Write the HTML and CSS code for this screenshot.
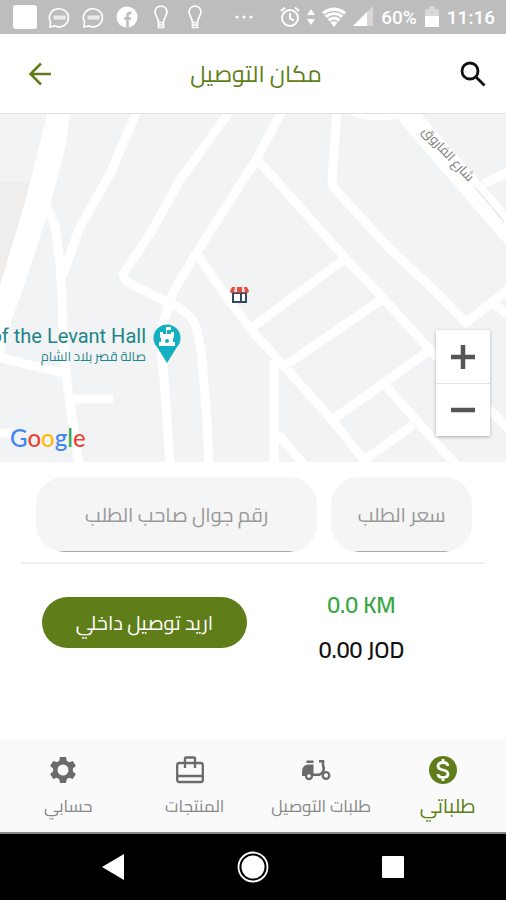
FILE: index.html
```
<!DOCTYPE html>
<html lang="ar">
<head>
    <meta charset="UTF-8">
    <meta name="viewport" content="width=device-width, initial-scale=1.0">
    <title>مكان التوصيل</title>
    <link rel="stylesheet" href="styles.css">
</head>
<body>
    <div class="status-bar">
        <div class="status-group">
            <svg width="24" height="24" viewBox="0 0 24 24"><rect width="24" height="24" rx="3" fill="#fff"/></svg>
            <svg width="24" height="24" viewBox="0 0 24 24" fill="none" stroke="#fff" stroke-width="1.700"><path d="M3.500 17A9.500 9 0 1 1 8 21L3 22Z"/><path d="M6.500 12.500h12" stroke-width="4" opacity=".7"/></svg>
            <svg width="24" height="24" viewBox="0 0 24 24" fill="none" stroke="#fff" stroke-width="1.700"><path d="M3.500 17A9.500 9 0 1 1 8 21L3 22Z"/><path d="M6.500 12.500h12" stroke-width="4" opacity=".7"/></svg>
            <svg width="24" height="24" viewBox="0 0 24 24"><circle cx="12" cy="12" r="10.500" fill="#fff"/><path d="M12.500 22.500v-12q0-3 4-2.600M9 13.500h7" fill="none" stroke="#bdbdbd" stroke-width="2.600"/></svg>
            <svg width="24" height="24" viewBox="0 0 24 24" fill="none" stroke="#fff" stroke-width="1.700"><path d="M9.500 17.500C9.500 13 6 11 6 7a6 6 0 0 1 12 0c0 4-3.500 6-3.500 10.500ZM9.500 17.500v5h5v-5M9.500 20h5"/></svg>
            <svg width="24" height="24" viewBox="0 0 24 24" fill="none" stroke="#fff" stroke-width="1.700"><path d="M9.500 17.500C9.500 13 6 11 6 7a6 6 0 0 1 12 0c0 4-3.500 6-3.500 10.500ZM9.500 17.500v5h5v-5M9.500 20h5"/></svg>
        </div>
        <svg width="20" height="24" viewBox="0 0 20 24" fill="#fff"><circle cx="3" cy="12" r="1.500"/><circle cx="10" cy="12" r="1.500"/><circle cx="17" cy="12" r="1.500"/></svg>
        <div class="status-group status-right">
            <svg width="20" height="22" viewBox="0 0 20 22" fill="none" stroke="#fff" stroke-width="2"><circle cx="10" cy="12" r="8"/><path d="M10 7v5.500l4 2M1 5l4-3.500M19 5l-4-3.500"/></svg>
            <svg width="8" height="22" viewBox="0 0 8 22" fill="#fff"><path d="M4 3l4 6H0ZM4 19l4-6H0Z"/></svg>
            <svg width="24" height="22" viewBox="0 0 24 22"><path d="M12 21L0 6Q12-3 24 6Z" fill="#fff"/><path d="M2 9Q12 2 22 9M5 12.500Q12 7 19 12.500M8 16Q12 13 16 16" fill="none" stroke="#bdbdbd" stroke-width="1.300"/></svg>
            <svg width="20" height="22" viewBox="0 0 20 22"><path d="M0 20L20 0V20Z" fill="#fff" opacity=".4"/><path d="M0 20L14 6V20Z" fill="#fff"/></svg>
            <span class="battery-level">60%</span>
            <svg width="14" height="22" viewBox="0 0 14 22" fill="#fff"><path d="M4 0h6v3h4v7H0V3h4Z" opacity=".4"/><path d="M0 10h14v11H0Z"/></svg>
            <span class="clock">11:16</span>
        </div>
    </div>

    <header>
        <button type="button" class="btn-icon" aria-label="رجوع">
            <svg width="24" height="24" viewBox="0 0 24 24" fill="none" stroke="#5f7d18" stroke-width="2.500"><path d="M23 12H3M13 1.500L2.500 12L13 22.500"/></svg>
        </button>
        <h1 dir="rtl">مكان التوصيل</h1>
        <button type="button" class="btn-icon" aria-label="بحث">
            <svg width="26" height="26" viewBox="0 0 26 26" fill="none" stroke="#111" stroke-width="2.800"><circle cx="10" cy="10" r="8"/><path d="M15.500 15.500L24.500 24.500"/></svg>
        </button>
    </header>

    <main>
        <div class="map">
            <svg class="map-canvas" viewBox="0 0 506 348" preserveAspectRatio="xMidYMid slice">
                <path d="M0 68H32L0 172Z" fill="#f0eeed"/>
                <!-- main roads -->
                <path d="M47 0H70L66 30L50 92L24 172L12 205L3 245L0 245V172L26 85Z" fill="#fff"/>
                <path d="M393 0H421L506 97V131Z" fill="#fff"/>
                <!-- side streets -->
                <g class="streets">
                    <path d="M47 92L55 112L60 150L62 180L63 226L68 276L79 350"/>
                    <path d="M137-3L110 60L80 113L63 160"/>
                    <path d="M230-3L180 66L150 120L123 160L127 168L173 191Q193 200 197 216L202 243L207 309L209 350"/>
                    <path d="M282-3L256 46L197 138L173 178L162 212L162 243L165 276L170 350"/>
                    <path d="M257 45L346 145L383 184L430 236L510 316"/>
                    <path d="M337-3L332 66Q332 72 336 76L386 131L436 178L466 209L510 174M492 189L510 202"/>
                    <path d="M197 140L223 178L253 218L283 251L333 307L367 350"/>
                    <path d="M343 146L300 178L253 213M381 186L286 251M430 236L331 307M385 271L455 350M413 311L362 348"/>
                    <path d="M274 246V350M278 320L303 350M352-3Q372 5 396 0M483 70L510 57"/>
                    <path d="M0 244L64 259M70 285H113M0 319H12"/>
                </g>
                <path d="M475 73L504 108" fill="none" stroke="#d5d7d9" stroke-width="1"/>
                <text class="street-name" transform="translate(445 43) rotate(47)">شارع الفاروق</text>

                <!-- hall pin -->
                <text class="poi-name" x="146" y="229">of the Levant Hall</text>
                <text class="poi-name-ar" x="146" y="247">صالة قصر بلاد الشام</text>
                <path d="M167 249L157 233A13.500 13.500 0 1 1 177 233Z" fill="#12b0c0"/>
                <path d="M160 218h3v2h3v-7h5v3h-4v4h4v-2h3v5l-1 1v4h2v4h-16v-4h2v-4l-1-1Z" fill="#fff"/>
                <circle cx="167" cy="227" r="2" fill="#12b0c0"/>

                <!-- store marker -->
                <path d="M233 179h13v9h-13Z" fill="#fff" stroke="#344a5e" stroke-width="2"/>
                <path d="M241 188v-8" stroke="#344a5e" stroke-width="2"/>
                <path d="M232 173h15l2 4a2.200 2.200 0 0 1-4 1 2.200 2.200 0 0 1-3.700 0 2.200 2.200 0 0 1-3.700 0 2.200 2.200 0 0 1-3.600 0 2.200 2.200 0 0 1-4-1Z" fill="#e0523f"/>
                <path d="M235 173h2v5h-3ZM242 173h2l1 5h-3Z" fill="#f3dedb"/>
            </svg>
            <div class="map-logo" dir="ltr"><span class="blue">G</span><span class="red">o</span><span class="yellow">o</span><span class="blue">g</span><span class="green">l</span><span class="red">e</span></div>
            <div class="zoom-controls">
                <button type="button" aria-label="تكبير"><svg width="24" height="24" viewBox="0 0 24 24"><path d="M0 12H24M12 0V24" stroke="#555" stroke-width="4.500"/></svg></button>
                <button type="button" aria-label="تصغير"><svg width="24" height="24" viewBox="0 0 24 24"><path d="M0 12H24" stroke="#555" stroke-width="4.500"/></svg></button>
            </div>
        </div>

        <form class="order-form">
            <input type="tel" class="field" dir="rtl" placeholder="رقم جوال صاحب الطلب" aria-label="رقم جوال صاحب الطلب">
            <input type="text" class="field" dir="rtl" placeholder="سعر الطلب" aria-label="سعر الطلب">
        </form>
        <hr>
        <div class="summary">
            <button type="button" class="btn-delivery" dir="rtl">اريد توصيل داخلي</button>
            <div class="totals">
                <div class="distance">0.0 KM</div>
                <div class="price">0.00 JOD</div>
            </div>
        </div>
    </main>

    <nav class="tabs">
        <a href="#">
            <svg width="28" height="28" viewBox="0 0 28 28"><path d="M11 1h6l.7 3.700 2.500 1.500 3.600-1.300 3 5-2.900 2.500v3.200l2.900 2.500-3 5-3.600-1.300-2.500 1.500L17 27h-6l-.7-3.700-2.500-1.500-3.600 1.300-3-5 2.900-2.500v-3.200L1.200 9.900l3-5 3.600 1.300 2.500-1.500Z" fill="#6b6b6b"/><circle cx="14" cy="14" r="5.500" fill="#fafafa"/></svg>
            <span>حسابي</span>
        </a>
        <a href="#">
            <svg width="28" height="28" viewBox="0 0 28 28" fill="none" stroke="#6b6b6b" stroke-width="2.300"><rect x="1.200" y="7" width="25.600" height="19" rx="2"/><path d="M1 20H27M9 12V2.500Q9 1.500 10 1.500H18Q19 1.500 19 2.500V12"/></svg>
            <span>المنتجات</span>
        </a>
        <a href="#">
            <svg width="30" height="28" viewBox="0 0 30 28"><path d="M5.500 4.500h7V7h-7ZM1 20v-4q0-7 6-7.500h5.500V20Z" fill="#6b6b6b"/><path d="M12 18.800h6q5-2.500 4.800-7L22 9.500V5.200h-4" fill="none" stroke="#6b6b6b" stroke-width="2.500"/><g fill="#fafafa" stroke="#6b6b6b" stroke-width="2.300"><circle cx="8" cy="20" r="3"/><circle cx="25" cy="19.500" r="3.300"/></g></svg>
            <span>طلبات التوصيل</span>
        </a>
        <a href="#" class="active">
            <svg width="28" height="28" viewBox="0 0 28 28"><circle cx="14" cy="14" r="14" fill="#5f7d18"/><path d="M19 10q-.5-3.500-5-3.500T9 10q0 3 5 4t5 4q0 3.500-5 3.500T9 18M14 3v4M14 21v4" fill="none" stroke="#fff" stroke-width="2.800"/></svg>
            <span>طلباتي</span>
        </a>
    </nav>

    <div class="system-bar">
        <button type="button" aria-label="Back"><svg width="24" height="28" viewBox="0 0 24 28"><path d="M23 1V27L1 14Z" fill="#fff"/></svg></button>
        <button type="button" aria-label="Home"><svg width="32" height="32" viewBox="0 0 32 32"><circle cx="16" cy="16" r="14.500" fill="none" stroke="#fff" stroke-width="1.800"/><circle cx="16" cy="16" r="11.500" fill="#fff"/></svg></button>
        <button type="button" aria-label="Recent"><svg width="22" height="22" viewBox="0 0 22 22"><rect width="22" height="22" rx="1" fill="#fff"/></svg></button>
    </div>
</body>
</html>
```
FILE: styles.css
```
* {
    box-sizing: border-box;
}

body {
    margin: 0;
    min-height: 100vh;
    display: flex;
    flex-direction: column;
    background: #fff;
    font-family: 'Cairo', 'Open Sans', 'DejaVu Sans', sans-serif;
}

button {
    padding: 0;
    border: none;
    background: none;
    font-family: inherit;
    cursor: pointer;
}

svg {
    display: block;
    flex: none;
}

.status-bar {
    height: 34px;
    padding: 0 11px 0 13px;
    display: flex;
    align-items: center;
    justify-content: space-between;
    background: #bdbdbd;
    color: #fff;
    font-family: Roboto, sans-serif;
    font-size: 19px;
    font-weight: 500;
}

.status-group {
    display: flex;
    align-items: center;
    gap: 10px;
}

.status-right {
    gap: 8px;
}

.status-right svg + svg {
    margin-left: -1px;
}

header {
    height: 80px;
    padding: 0 20px 0 28px;
    display: flex;
    align-items: center;
    justify-content: space-between;
    border-bottom: 1px solid #dfe1e2;
}

header h1 {
    margin: 0;
    color: #5f7d18;
    font-size: 23px;
    font-weight: 400;
}

.map {
    position: relative;
    height: 348px;
    overflow: hidden;
    background: #f1f3f4;
}

.map-canvas {
    width: 100%;
    height: 100%;
}

.streets path {
    fill: none;
    stroke: #fff;
    stroke-width: 9;
    stroke-linejoin: round;
}

.street-name {
    fill: #777;
    font-size: 13px;
    text-anchor: middle;
}

.poi-name {
    fill: #1d8589;
    font-family: Roboto, sans-serif;
    font-size: 20px;
    text-anchor: end;
}

.poi-name-ar {
    fill: #1d8589;
    font-size: 13px;
    text-anchor: end;
}

.map-logo {
    position: absolute;
    left: 10px;
    bottom: 8px;
    font-family: Lato, sans-serif;
    font-size: 24px;
    font-weight: 500;
    line-height: 32px;
}

.blue { color: #4285f4; }
.red { color: #ea4335; }
.yellow { color: #fbbc05; }
.green { color: #34a853; }

.zoom-controls {
    position: absolute;
    right: 16px;
    bottom: 26px;
    width: 54px;
    background: #fff;
    box-shadow: 0 1px 3px rgba(0, 0, 0, 0.3);
}

.zoom-controls button {
    width: 100%;
    height: 53px;
    display: flex;
    align-items: center;
    justify-content: center;
}

.zoom-controls button + button {
    border-top: 1px solid #e4e4e4;
}

.order-form {
    display: grid;
    grid-template-columns: 2fr 1fr;
    gap: 14px;
    padding: 15px 34px 10px 36px;
}

.field {
    width: 100%;
    min-width: 0;
    height: 75px;
    padding: 0 20px;
    border: none;
    border-radius: 28px;
    background: linear-gradient(#aaa, #aaa) center bottom / calc(100% - 46px) 1px no-repeat #f5f5f5;
    font-family: inherit;
    font-size: 20px;
    text-align: center;
}

.field::placeholder {
    color: #999;
    opacity: 1;
}

hr {
    height: 2px;
    margin: 0 21px;
    border: none;
    background: #f0f0f0;
}

.summary {
    display: grid;
    grid-template-columns: 1fr 1fr;
    align-items: start;
    justify-items: center;
    padding: 18px 36px;
}

.btn-delivery {
    width: 100%;
    max-width: 205px;
    height: 51px;
    margin-top: 15px;
    border-radius: 26px;
    background: #5f7d18;
    color: #fff;
    font-size: 20px;
}

.totals {
    color: #111;
    font-size: 23px;
    font-weight: 600;
    line-height: 45px;
    text-align: center;
}

.distance {
    color: #35a743;
}

.tabs {
    display: flex;
    margin-top: auto;
    height: 94px;
    padding-top: 16px;
    background: #fafafa;
    border-bottom: 2px solid #888;
}

.tabs a {
    flex: 1;
    display: flex;
    flex-direction: column;
    align-items: center;
    gap: 8px;
    color: #888;
    font-size: 17px;
    line-height: 28px;
    white-space: nowrap;
    text-decoration: none;
}

.tabs span {
    padding-left: 10px;
}

.tabs .active {
    color: #5f7d18;
    font-size: 20px;
}

.system-bar {
    height: 66px;
    padding: 0 43px;
    display: flex;
    align-items: center;
    background: #000;
}

.system-bar button {
    flex: 1;
    display: flex;
    justify-content: center;
}
```
